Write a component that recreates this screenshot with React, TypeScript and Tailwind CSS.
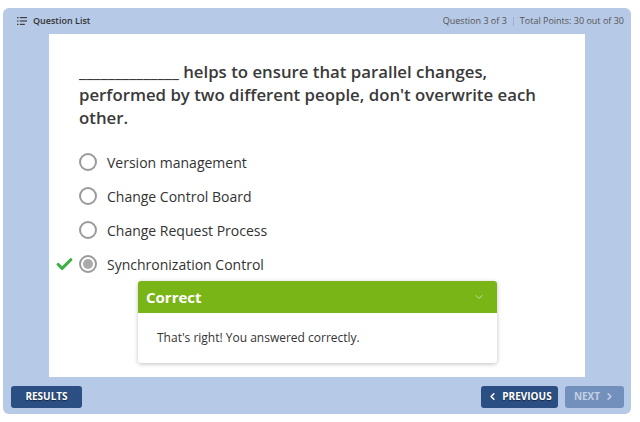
import { Check, ChevronDown, ChevronLeft, ChevronRight } from 'lucide-react'

const OPTIONS = ['Version management', 'Change Control Board', 'Change Request Process', 'Synchronization Control']
const SELECTED = 3

function ListIcon() {
  return (
    <svg width="10" height="8" viewBox="0 0 10 8" className="text-neutral-700">
      <rect x="0" y="0" width="1.5" height="1.2" fill="currentColor" />
      <rect x="0" y="3.4" width="1.5" height="1.2" fill="currentColor" />
      <rect x="0" y="6.8" width="1.5" height="1.2" fill="currentColor" />
      <rect x="2.8" y="0" width="7.2" height="1.2" fill="currentColor" />
      <rect x="2.8" y="3.4" width="7.2" height="1.2" fill="currentColor" />
      <rect x="2.8" y="6.8" width="5" height="1.2" fill="currentColor" />
    </svg>
  )
}

export default function App() {
  return (
    <div className="h-[422px] w-[640px] bg-white pt-2 pl-[3px] font-['Open_Sans',sans-serif]">
      <div className="flex h-[406px] w-[628px] flex-col rounded-md bg-[#b6c9e6]">
        <div className="flex h-[26px] items-center justify-between pr-[7px] pl-[14px]">
          <div className="flex items-center gap-[6px] text-[9px] font-semibold text-[#333]">
            <ListIcon />
            <span>Question List</span>
          </div>
          <div className="flex items-center text-[9px] text-[#555]">
            <span>Question 3 of 3</span>
            <span className="mx-[6px] h-[9px] w-px bg-[#9db0cc]" />
            <span>Total Points: 30 out of 30</span>
          </div>
        </div>

        <div className="ml-[46px] h-[343px] w-[536px] bg-white pt-[26px] pl-[30px]">
          <p className="w-[470px] text-[16.8px] leading-[23px] font-semibold text-[#3a3a3a]">
            ______________ helps to ensure that parallel changes, performed by two different people, don't overwrite each
            other.
          </p>

          <div className="mt-[16px] flex flex-col">
            {OPTIONS.map((opt, i) => (
              <div key={opt} className="relative flex h-[34px] items-center gap-[10px]">
                {i === SELECTED && (
                  <Check className="absolute top-[8px] -left-[24px] text-[#3cb043]" size={19} strokeWidth={4} />
                )}
                <span className="flex h-[18px] w-[18px] items-center justify-center rounded-full border-2 border-[#9a9a9a]">
                  {i === SELECTED && <span className="h-[10px] w-[10px] rounded-full bg-[#aaa]" />}
                </span>
                <span className="text-[14px] text-[#333]">{opt}</span>
              </div>
            ))}
          </div>

          <div className="ml-[59px] w-[359px] overflow-hidden rounded-[3px] bg-white shadow-[0_1px_4px_rgba(0,0,0,0.25)]">
            <div className="flex h-[32px] items-center justify-between bg-[#7ab517] pr-[12px] pl-[8px]">
              <span className="text-[15px] font-bold text-white">Correct</span>
              <ChevronDown size={12} className="text-[#c6e29a]" />
            </div>
            <div className="flex h-[50px] items-center pl-[19px] text-[12px] text-[#333]">
              That's right! You answered correctly.
            </div>
          </div>
        </div>

        <div className="flex flex-1 items-center justify-between pt-[2px] pr-[7px] pl-[8px]">
          <button className="h-[22px] w-[71px] rounded-[3px] bg-[#2b4e83] text-[10px] font-bold text-white [text-shadow:0_1px_1px_rgba(0,0,0,0.5)]">
            RESULTS
          </button>
          <div className="flex gap-[7px]">
            <button className="flex h-[22px] w-[77px] items-center justify-center gap-[4px] rounded-[3px] bg-[#2b4e83] text-[10px] font-bold text-white [text-shadow:0_1px_1px_rgba(0,0,0,0.5)]">
              <ChevronLeft size={11} strokeWidth={3.5} />
              PREVIOUS
            </button>
            <button className="flex h-[22px] w-[59px] items-center justify-center gap-[4px] rounded-[3px] bg-[#7290bb] text-[10px] font-bold text-[#c3d0e4]">
              NEXT
              <ChevronRight size={11} strokeWidth={3.5} />
            </button>
          </div>
        </div>
      </div>
    </div>
  )
}
